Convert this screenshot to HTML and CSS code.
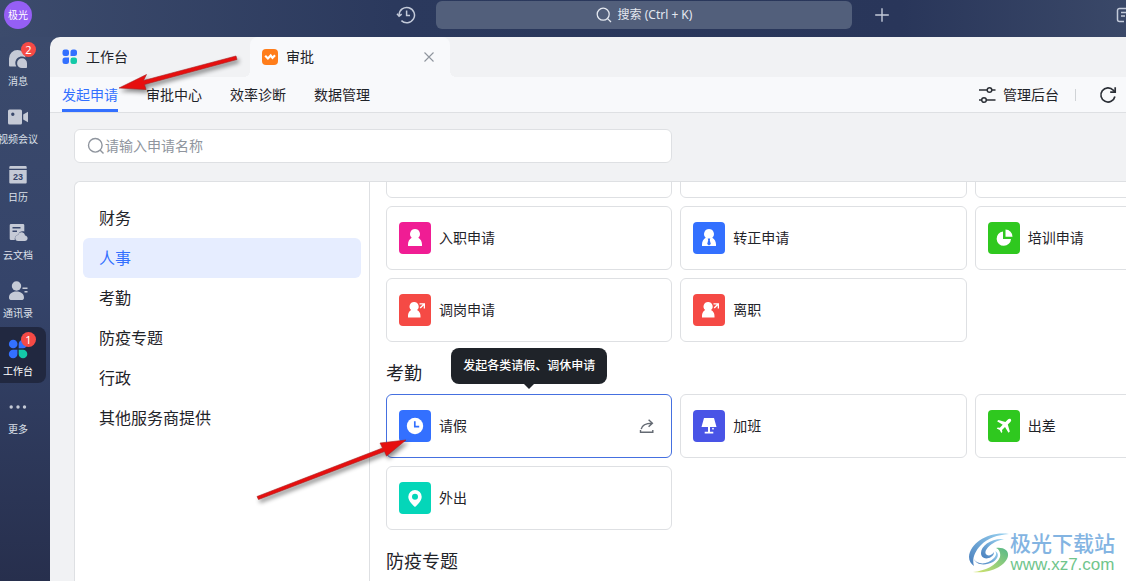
FILE: index.html
```html
<!DOCTYPE html>
<html lang="zh-CN">
<head>
<meta charset="utf-8">
<title>审批</title>
<link rel="stylesheet" href="styles.css">
</head>
<body>
<div class="app">
  <header class="topbar">
    <button class="avatar">极光</button>
    <div class="topbar-center">
      <button class="icon-btn" aria-label="历史"><svg width="20" height="20" viewBox="0 0 20 20" fill="none" stroke="#c3cad9" stroke-width="1.5"><path d="M3.1 10A7.7 7.7 0 1 1 5.4 15.6"/><path d="M1 8.8l2.1 2.4 2.6-2M10.6 5.6v5h3.4"/></svg></button>
      <button class="global-search"><svg width="16" height="16" viewBox="0 0 16 16" fill="none" stroke="#e4e8f0" stroke-width="1.3"><circle cx="7.2" cy="7.2" r="6"/><path d="M11.6 11.6l3.4 3.4"/></svg><span>搜索 (Ctrl + K)</span></button>
      <button class="icon-btn" aria-label="新建"><svg width="20" height="20" viewBox="0 0 20 20" fill="none" stroke="#c3cad9" stroke-width="1.4"><path d="M10 3.2v13.6M3.2 10h13.6"/></svg></button>
    </div>
    <button class="icon-btn notes-btn" aria-label="便签"><svg width="16" height="16" viewBox="0 0 16 16" fill="none" stroke="#c3cad9" stroke-width="1.5"><path d="M14 9V1.5H3.5a2 2 0 0 0-2 2v9a2 2 0 0 0 2 2H8M5 5.5h7M5 9h4"/></svg></button>
  </header>

  <nav class="rail">
    <a class="rail-item" href="#"><span class="rail-icon"><svg width="20" height="20" viewBox="0 0 20 20" fill="#c5cad6"><path d="M9.500 1A8.500 8.500 0 0 0 1 9.500v6.800c0 .8.500 1.300 1.300 1.300h6a6.800 6.800 0 0 1-1-3.500c0-3.900 3-6.600 6.700-6.600 1.300 0 2.500.300 3.500.9C17 4 13.700 1 9.500 1z"/><path d="M14 9.300a4.900 4.900 0 1 0 0 9.800h4.200c.5 0 .8-.3.800-.8v-4.100a4.900 4.900 0 0 0-5-4.900z"/></svg><span class="badge">2</span></span><span>消息</span></a>
    <a class="rail-item" href="#"><span class="rail-icon"><svg width="20" height="20" viewBox="0 0 20 20" fill="#c5cad6"><path fill-rule="evenodd" d="M1.500 2.500h11A1.500 1.500 0 0 1 14 4v12a1.500 1.500 0 0 1-1.500 1.500h-11A1.500 1.500 0 0 1 0 16V4a1.500 1.500 0 0 1 1.500-1.500zM4.800 5.500a1.700 1.700 0 1 0 0 3.400 1.700 1.700 0 0 0 0-3.400z"/><path d="M15.200 7.500L20 4.700v10.600l-4.800-2.800z"/></svg></span><span>视频会议</span></a>
    <a class="rail-item" href="#"><span class="rail-icon"><svg width="20" height="20" viewBox="0 0 20 20"><path fill="#c5cad6" d="M2.500 1h15A1.200 1.200 0 0 1 18.700 2.200v1.500H1.300V2.200A1.200 1.200 0 0 1 2.500 1zM1.300 5h17.400v12.600a1 1 0 0 1-1 1H2.300a1 1 0 0 1-1-1z"/><text class="calendar-day" x="10" y="15" text-anchor="middle">23</text></svg></span><span>日历</span></a>
    <a class="rail-item" href="#"><span class="rail-icon"><svg width="20" height="20" viewBox="0 0 20 20" fill="#c5cad6"><path fill-rule="evenodd" d="M3 1h12a1.300 1.300 0 0 1 1.300 1.300v6.200c-2.500-1-5.200.3-6 2.900-2.500.5-3.900 2.500-3.500 5.600H3a1.300 1.300 0 0 1-1.300-1.300V2.300A1.300 1.300 0 0 1 3 1zM4.500 4v1.500h8V4zM4.500 7.500V9H9V7.500z"/><path d="M10.200 18a3 3 0 0 1-.1-6c.6-2.100 2.200-3 3.900-2.700 1.700.3 2.700 1.500 3 3.100 1.500.2 2.600 1.300 2.600 2.800 0 1.600-1.200 2.800-2.800 2.800z"/></svg></span><span>云文档</span></a>
    <a class="rail-item" href="#"><span class="rail-icon"><svg width="20" height="20" viewBox="0 0 20 20" fill="#c5cad6"><circle cx="8.500" cy="5" r="4.700"/><path d="M1 16.700c0-3.800 3-6.100 7.500-6.100s7.500 2.300 7.500 6.100c0 1.500-1 2.300-2.600 2.300H3.600C2 19 1 18.200 1 16.700zM14.500 6.500h5v1.600h-5zM16.500 10h3v1.600h-3z"/></svg></span><span>通讯录</span></a>
    <a class="rail-item rail-active" href="#"><span class="rail-icon"><svg width="20" height="20" viewBox="0 0 20 20" fill="#3370ff"><circle cx="5.200" cy="5" r="4.300"/><path d="M10.700 9.300V5A4.300 4.300 0 1 1 15 9.300zM9.400 10.700V15a4.300 4.300 0 1 1-4.300-4.300z"/><path fill="#14c9a8" d="M10.700 10.700H15a4.300 4.300 0 1 1-4.300 4.300z"/></svg><span class="badge">1</span></span><span>工作台</span></a>
    <a class="rail-item" href="#"><span class="rail-icon"><svg width="20" height="20" viewBox="0 0 20 20" fill="#c5cad6"><circle cx="3.200" cy="10" r="1.700"/><circle cx="10" cy="10" r="1.700"/><circle cx="16.500" cy="10" r="1.700"/></svg></span><span>更多</span></a>
  </nav>

  <main class="main">
    <div class="tabs">
      <a class="tab" href="#"><svg width="16" height="16" viewBox="0 0 16 16" fill="#3370ff"><rect x="0.500" y="0.500" width="6.500" height="6.500" rx="2.200"/><path d="M8.500 7V3a2.500 2.500 0 0 1 2.500-2.500h1.500A2.500 2.500 0 0 1 15 3v1.500A2.500 2.500 0 0 1 12.500 7zM.5 11A2.500 2.500 0 0 1 3 8.500h4v4A2.500 2.500 0 0 1 4.500 15H3a2.500 2.500 0 0 1-2.500-2.500z"/><rect x="8.500" y="8.500" width="6.500" height="6.500" rx="2.200" fill="#14c9a8"/></svg><span>工作台</span></a>
      <div class="tab tab-active"><svg width="16" height="16" viewBox="0 0 16 16"><rect width="16" height="16" rx="4" fill="#ff7d1a"/><path d="M3.200 6.800l2.700 2.700 2.800-3 1.800 2.400L13 6.200" fill="none" stroke="#fff" stroke-width="2.200"/></svg><span>审批</span><button class="tab-close" aria-label="关闭"><svg width="12" height="12" viewBox="0 0 12 12" fill="none" stroke="#8f959e" stroke-width="1.100"><path d="M1.500 1.500l9 9M10.500 1.500l-9 9"/></svg></button></div>
    </div>
    <nav class="subnav">
      <a class="subnav-item subnav-active" href="#">发起申请</a>
      <a class="subnav-item" href="#">审批中心</a>
      <a class="subnav-item" href="#">效率诊断</a>
      <a class="subnav-item" href="#">数据管理</a>
      <div class="subnav-tools">
        <a class="admin-link" href="#"><svg width="18" height="18" viewBox="0 0 18 18" fill="none" stroke="#2b2f36" stroke-width="1.500"><path d="M1 4h8M14 4h3.500M1 14h2.500M8.500 14h9"/><circle cx="11.500" cy="4" r="2.300"/><circle cx="6" cy="14" r="2.300"/></svg><span>管理后台</span></a>
        <span class="divider"></span>
        <button class="icon-btn refresh-btn" aria-label="刷新"><svg width="18" height="18" viewBox="0 0 18 18" fill="none" stroke="#2b2f36" stroke-width="1.700"><path d="M15.900 10.500A7.100 7.100 0 1 1 14.300 4.200L16 6"/><path d="M16.200 1.200v5h-5"/></svg></button>
      </div>
    </nav>

    <div class="content">
      <label class="search-box"><svg width="18" height="18" viewBox="0 0 18 18" fill="none" stroke="#8f959e" stroke-width="1.400"><circle cx="8.300" cy="8.300" r="6.800"/><path d="M13 13l3.500 3.500"/></svg><input type="text" placeholder="请输入申请名称" aria-label="请输入申请名称"></label>
      <div class="panel">
        <nav class="categories">
          <a class="category" href="#">财务</a>
          <a class="category category-active" href="#">人事</a>
          <a class="category" href="#">考勤</a>
          <a class="category" href="#">防疫专题</a>
          <a class="category" href="#">行政</a>
          <a class="category" href="#">其他服务商提供</a>
        </nav>
        <div class="forms">
          <div class="cards cards-scrolled">
            <div class="card"></div>
            <div class="card"></div>
            <div class="card"></div>
            <a class="card" href="#"><svg class="tile pink" viewBox="0 0 32 32"><path d="M16 7a5 5 0 0 0-3.300 8.700C10.300 17 9 19.500 9 22.500V24h14v-1.500c0-3-1.300-5.500-3.700-6.800A5 5 0 0 0 16 7z"/></svg><span>入职申请</span></a>
            <a class="card" href="#"><svg class="tile blue" viewBox="0 0 32 32"><path fill-rule="evenodd" d="M16 7a5 5 0 0 0-3.300 8.700C10.300 17 9 19.500 9 22.500V24h14v-1.500c0-3-1.300-5.500-3.700-6.800A5 5 0 0 0 16 7zM14.700 16.500h2.600l-.5 1.700 1 3.800-1.800 1.500-1.800-1.500 1-3.800z"/></svg><span>转正申请</span></a>
            <a class="card" href="#"><svg class="tile green" viewBox="0 0 32 32"><path d="M15 9.500V17h8a7.200 7.200 0 1 1-8-7.500zM17.500 7.500a7 7 0 0 1 7 7.300h-7z"/></svg><span>培训申请</span></a>
            <a class="card" href="#"><svg class="tile red" viewBox="0 0 32 32"><path d="M15 8a4.500 4.500 0 0 0-2.800 8C10 17.200 9 19.300 9 22v1.500h12.500V22c0-2.700-1.200-4.800-3.500-6A4.500 4.500 0 0 0 15 8zM20.500 9.200H26v5.300h-1.300v-3l-3 3-1-1 3-3h-3.200z"/></svg><span>调岗申请</span></a>
            <a class="card" href="#"><svg class="tile red" viewBox="0 0 32 32"><path d="M15 8a4.500 4.500 0 0 0-2.800 8C10 17.200 9 19.300 9 22v1.500h12.500V22c0-2.700-1.200-4.800-3.500-6A4.500 4.500 0 0 0 15 8zM20.500 9.200H26v5.300h-1.300v-3l-3 3-1-1 3-3h-3.200z"/></svg><span>离职</span></a>
          </div>
          <h2 class="section-title">考勤</h2>
          <div class="cards">
            <div class="card card-hover"><svg class="tile blue" viewBox="0 0 32 32"><circle cx="16" cy="16" r="8.200"/><path d="M15.800 11.200v5.500h4.400" fill="none" stroke="#3370ff" stroke-width="1.700"/></svg><span>请假</span><button class="icon-btn share-btn" aria-label="分享"><svg width="16" height="16" viewBox="0 0 16 16" fill="none" stroke="#646a73" stroke-width="1.400"><path d="M2.200 11.200C3 7.300 6 5.200 13 5.200M9.600 1.700l3.800 3.500-3.800 3.600M1.500 12v2.300h12.300V12"/></svg></button><span class="tooltip" role="tooltip">发起各类请假、调休申请</span></div>
            <a class="card" href="#"><svg class="tile indigo" viewBox="0 0 32 32"><path d="M11 8h10l2.500 9H17v4.800h3.300v1.700h-8.600v-1.700H15V17H8.500z"/><circle cx="20" cy="18.700" r="0.900"/></svg><span>加班</span></a>
            <a class="card" href="#"><svg class="tile green" viewBox="0 0 32 32"><path d="M22.800 9.200c-.9-.9-2.200-.4-3.200.6l-2.200 2.200-7-2-1.300 1.300 5.600 3.500-2.900 3-2.100-.3-1 1 3 1.600 1.600 3 1-1-.3-2.100 3-2.900 3.500 5.600 1.300-1.300-2-7 2.300-2.200c1-1 1.500-2.200.7-3z"/></svg><span>出差</span></a>
            <a class="card" href="#"><svg class="tile teal" viewBox="0 0 32 32"><path fill-rule="evenodd" d="M16 8a6.700 6.700 0 0 0-6.700 6.700c0 3.800 3.500 7.300 6.700 10.300 3.200-3 6.700-6.500 6.700-10.300A6.700 6.700 0 0 0 16 8zm0 3.800a3 3 0 1 1 0 6 3 3 0 0 1 0-6z"/></svg><span>外出</span></a>
          </div>
          <h2 class="section-title">防疫专题</h2>
        </div>
      </div>
    </div>
  </main>
</div>

<svg class="arrow arrow-nav" width="130" height="50" viewBox="0 0 130 50" aria-hidden="true"><path d="M10 38L37.500 24.500 34.500 30.500 127 6 128 9.500 35.500 34.500 37 39.500z" fill="#e60f0f" stroke="#a92020" stroke-width="0.600"/></svg>
<svg class="arrow arrow-card" width="160" height="75" viewBox="0 0 160 75" aria-hidden="true"><path d="M156 10L130 13 132.500 18 7 66.500 8.500 69.500 134.500 21.500 136.500 26z" fill="#e60f0f" stroke="#a92020" stroke-width="0.600"/></svg>

<div class="watermark">
  <svg width="42" height="42" viewBox="0 0 42 42" aria-hidden="true">
    <defs>
      <linearGradient id="wm-blue" x1="0" y1="1" x2="1" y2="0"><stop offset="0" stop-color="#477dbc"/><stop offset="1" stop-color="#9bd4f2"/></linearGradient>
      <linearGradient id="wm-green" x1="0" y1="1" x2="1" y2="0"><stop offset="0" stop-color="#d6e56d"/><stop offset="1" stop-color="#55b889"/></linearGradient>
    </defs>
    <path fill="url(#wm-blue)" d="M41 2C22-1 2 10 1 25c0 4 2 7 5 9-2-6 0-14 7-21C20 6 29 3 41 2z"/>
    <path fill="url(#wm-blue)" d="M36 7c-13-1-23 7-23 14 0 5 5 7 10 4 2-1 3-3 3-5-2 3-5 4-7 3-5-3 3-13 17-16z"/>
    <path fill="url(#wm-green)" d="M28 16c7-1 13 2 12 8C38 34 22 42 5 40c12-1 24-7 27-15 1-4-1-8-4-9z"/>
    <path fill="url(#wm-blue)" d="M6 27c3 6 14 6 20-1 2-2 3-5 1-7 5 2 3 8-2 11-8 4-17 3-19-3z"/>
  </svg>
  <div class="watermark-text"><span class="watermark-name">极光下载站</span><span class="watermark-url">www.xz7.com</span></div>
</div>
</body>
</html>
```

FILE: styles.css
```css
* { box-sizing: border-box; }

body {
  margin: 0;
  overflow: hidden;
  color: #1f2329;
  font: 14px/20px "Noto Sans", "Noto Sans CJK SC", sans-serif;
}

a { color: inherit; text-decoration: none; }

button {
  padding: 0;
  border: 0;
  background: none;
  color: inherit;
  font: inherit;
}

svg { flex-shrink: 0; }

.app {
  display: grid;
  grid-template: 37px minmax(0, 1fr) / 50px minmax(0, 1fr);
  height: 100vh;
  background:
    linear-gradient(90deg, #3c4b6c 0, #2b395d 35%, #29365a 80%, #3a4868 100%) top / 100% 37px no-repeat,
    linear-gradient(180deg, #3c4b6c 0, #35446a 50%, #272f4d 100%);
}

.topbar {
  grid-column: 1 / -1;
  display: flex;
  align-items: flex-start;
  padding: 1px 0 0 4px;
  overflow: hidden;
}

.avatar {
  width: 28px;
  height: 28px;
  border-radius: 50%;
  background: #955ff5;
  color: #fff;
  font-size: 10px;
}

.topbar-center {
  flex: 1;
  display: flex;
  gap: 20px;
  align-items: center;
  padding: 0 224px 0 364px;
}

.icon-btn { display: flex; }

.global-search {
  flex: 1;
  display: flex;
  align-items: center;
  justify-content: center;
  gap: 6px;
  height: 28px;
  border-radius: 6px;
  background: #525f7b;
  color: #e4e8f0;
  font-size: 12px;
  white-space: nowrap;
}

.notes-btn { margin: 6px -6px 0 0; }

.rail {
  display: flex;
  flex-direction: column;
  gap: 2px;
  overflow: hidden;
}

.rail-item {
  display: flex;
  flex-direction: column;
  align-items: center;
  gap: 4px;
  width: 46px;
  height: 56px;
  padding: 12px 10px 0 0;
  border-radius: 0 8px 8px 0;
  color: #dce0e9;
  font-size: 10px;
  line-height: 16px;
  white-space: nowrap;
}

.rail-active { background: #212840; color: #fff; }

.rail-icon { position: relative; display: flex; }

.calendar-day {
  fill: #35446a;
  font: bold 9px "Liberation Sans", sans-serif;
}

.badge {
  position: absolute;
  top: -7px;
  right: -8px;
  width: 15px;
  height: 15px;
  border-radius: 50%;
  background: #f54a45;
  color: #fff;
  font-size: 11px;
  line-height: 15px;
  text-align: center;
}

.main {
  display: flex;
  flex-direction: column;
  overflow: hidden;
  border-top-left-radius: 10px;
  background: #f1f2f4;
}

.tabs { display: flex; height: 40px; }

.tab {
  display: flex;
  align-items: center;
  gap: 8px;
  width: 200px;
  padding: 0 15px 0 12px;
}

.tab-active {
  position: relative;
  border-radius: 8px 8px 0 0;
  background: #f8f9fb;
}

.tab-active::before,
.tab-active::after {
  content: "";
  position: absolute;
  bottom: 0;
  width: 6px;
  height: 6px;
}

.tab-active::before { right: 100%; background: radial-gradient(circle at 0 0, transparent 6px, #f8f9fb 6px); }
.tab-active::after { left: 100%; background: radial-gradient(circle at 100% 0, transparent 6px, #f8f9fb 6px); }

.tab-close { display: flex; margin-left: auto; }

.subnav {
  display: flex;
  gap: 28px;
  height: 36px;
  padding: 0 9px 0 12px;
  border-bottom: 1px solid #dee0e3;
  background: #f8f9fb;
  line-height: 35px;
  white-space: nowrap;
}

.subnav-active {
  color: #3370ff;
  background: linear-gradient(#3370ff, #3370ff) bottom / 100% 3px no-repeat;
}

.subnav-tools {
  display: flex;
  align-items: center;
  gap: 16px;
  margin-left: auto;
}

.admin-link { display: flex; align-items: center; gap: 7px; }

.divider { width: 1px; height: 12px; background: #d0d3d6; }

.refresh-btn { margin-left: 7px; }

.content {
  flex: 1;
  display: flex;
  flex-direction: column;
  gap: 18px;
  min-height: 0;
  padding: 16px 0 0 24px;
}

.search-box {
  display: flex;
  flex-shrink: 0;
  align-items: center;
  max-width: 598px;
  height: 34px;
  padding: 0 12px;
  border: 1px solid #dee0e3;
  border-radius: 6px;
  background: #fff;
}

.search-box input {
  flex: 1;
  padding: 0;
  border: 0;
  outline: 0;
  background: none;
  color: inherit;
  font: inherit;
}

.search-box input::placeholder { color: #8f959e; }

.panel {
  flex: 1;
  display: flex;
  min-height: 0;
  border: solid #dee0e3;
  border-width: 1px 0 0 1px;
  border-top-left-radius: 6px;
  background: #fff;
  overflow: hidden;
}

.categories {
  flex: 0 0 295px;
  padding: 16px 8px;
  border-right: 1px solid #dee0e3;
  font-size: 16px;
  line-height: 40px;
}

.category {
  display: block;
  padding: 0 16px;
  border-radius: 6px;
}

.category-active { background: #e6edff; color: #3370ff; }

.forms {
  flex: 1;
  min-width: 0;
  padding-left: 16px;
  overflow: hidden;
}

.cards {
  display: grid;
  grid-template-columns: repeat(3, minmax(0, 1fr));
  gap: 8px;
  min-width: 875px;
}

.cards-scrolled { margin-top: -48px; }

.card {
  position: relative;
  display: flex;
  align-items: center;
  gap: 8px;
  height: 64px;
  padding: 0 12px;
  border: 1px solid #dee0e3;
  border-radius: 6px;
}

.card-hover { border-color: #4570e0; }

.tile {
  width: 32px;
  height: 32px;
  border-radius: 4px;
  fill: #fff;
}

.pink { background: #f01d94; }
.blue { background: #3370ff; }
.green { background: #2fc81f; }
.red { background: #f54a45; }
.indigo { background: #4954e6; }
.teal { background: #04d6b9; }

.share-btn { margin: 0 4px 0 auto; }

.tooltip {
  position: absolute;
  bottom: calc(100% + 11px);
  left: 50%;
  padding: 8px 12px;
  border-radius: 8px;
  background: #1f2329;
  color: #fff;
  font-size: 12px;
  font-weight: 500;
  white-space: nowrap;
  transform: translateX(-50%);
}

.tooltip::after {
  content: "";
  position: absolute;
  top: 100%;
  left: 50%;
  margin-left: -5px;
  border: 5px solid transparent;
  border-top-color: #1f2329;
  border-bottom: 0;
}

.section-title {
  margin: 0;
  padding: 18px 0 8px;
  font-size: 18px;
  font-weight: 400;
  line-height: 26px;
}

.arrow {
  position: absolute;
  filter: drop-shadow(2px 3px 2px rgba(0, 0, 0, 0.45));
  pointer-events: none;
}

.arrow-nav { top: 50px; left: 109px; }
.arrow-card { top: 430px; left: 250px; }

.watermark {
  position: absolute;
  right: 11px;
  bottom: 6px;
  display: flex;
  align-items: center;
}

.watermark-text {
  display: flex;
  flex-direction: column;
  align-items: center;
}

.watermark-name {
  color: #83b4e2;
  font-size: 21px;
  font-weight: 500;
  line-height: 24px;
}

.watermark-url {
  color: #70c58c;
  font: 17px/20px "Liberation Sans", sans-serif;
}
```
